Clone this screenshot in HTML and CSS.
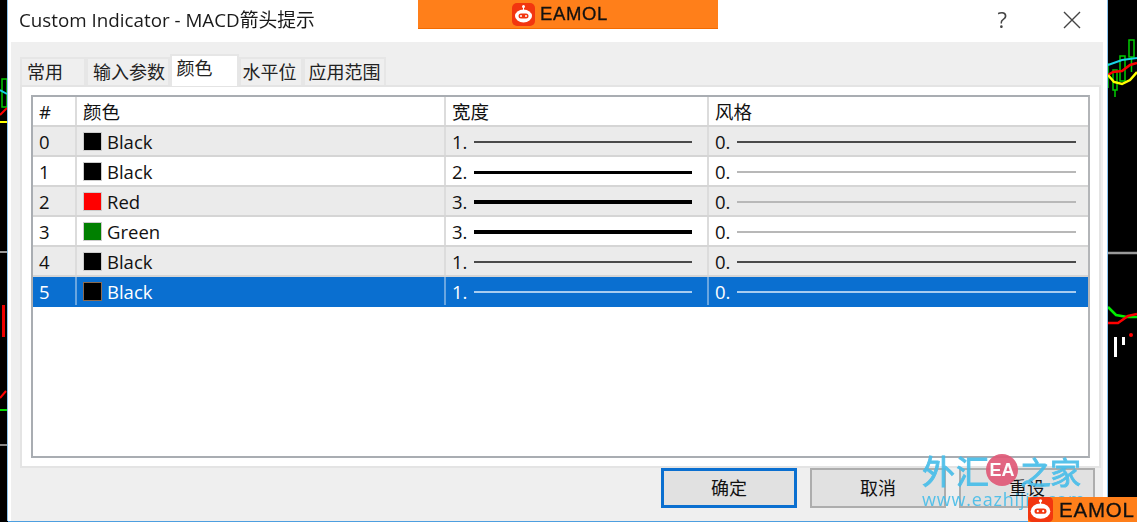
FILE: index.html
```html
<!DOCTYPE html>
<html lang="zh">
<head>
<meta charset="utf-8">
<title>Custom Indicator - MACD箭头提示</title>
<link rel="stylesheet" href="styles.css">
</head>
<body>
<svg class="chart" viewBox="0 0 1137 522" width="1137" height="522" fill="none">
  <rect x="2" y="79" width="5" height="28" stroke="#0c0" stroke-width="1.5"/>
  <path d="M0 90 L7 94" stroke="#19d3e6" stroke-width="2"/>
  <path d="M0 115 L7 108" stroke="#f00" stroke-width="2"/>
  <path d="M0 122 H7" stroke="#ff0" stroke-width="2"/>
  <path d="M0 252 H7" stroke="#999" stroke-width="2"/>
  <path d="M3.500 305 V337" stroke="#e00" stroke-width="3"/>
  <path d="M0 398 L6 391" stroke="#f00" stroke-width="2"/>
  <path d="M0 410 H7" stroke="#0d0" stroke-width="2"/>
  <path d="M0 445 H7" stroke="#888" stroke-width="2"/>
  <rect x="1129" y="40" width="5" height="17" stroke="#0c0" stroke-width="1.500"/>
  <path d="M1131.500 57 V72" stroke="#0c0" stroke-width="1.500"/>
  <rect x="1120" y="56" width="5" height="25" stroke="#0c0" stroke-width="1.500"/>
  <rect x="1113" y="70" width="4" height="20" stroke="#0c0" stroke-width="1.500"/>
  <path d="M1115 90 V97" stroke="#0c0" stroke-width="1.500"/>
  <path d="M1108 63 V88" stroke="#0c0" stroke-width="1.500"/>
  <path d="M1108 65 L1122 60 L1137 58" stroke="#19d3e6" stroke-width="2"/>
  <path d="M1108 75 L1113 72 L1122 71 L1130 65 L1137 63" stroke="#f00" stroke-width="2.500"/>
  <path d="M1108 75 L1114 82 L1122 84 L1130 80 L1137 72" stroke="#ff0" stroke-width="2.500"/>
  <path d="M1108 253 H1137" stroke="#999" stroke-width="2.500"/>
  <path d="M1108 307 L1116 315 L1127 317 H1137" stroke="#0e0" stroke-width="2.500"/>
  <path d="M1108 323 H1118 L1128 316 L1137 314" stroke="#f00" stroke-width="2.500"/>
  <circle cx="1131" cy="335" r="2" fill="#f00"/>
  <path d="M1115.500 337 V357" stroke="#fff" stroke-width="3"/>
  <path d="M1123.500 337 V345" stroke="#fff" stroke-width="3"/>
</svg>

<div class="dialog">
  <header class="titlebar">
    <div class="title">Custom Indicator - MACD箭头提示</div>
    <div class="help">?</div>
    <svg class="close" width="18" height="18" viewBox="0 0 18 18" fill="none" stroke="#444" stroke-width="1.400"><path d="M1 1 L17 17 M17 1 L1 17"/></svg>
  </header>
  <main class="body">
    <nav class="tabs">
      <span class="tab t1">常用</span>
      <span class="tab t2">输入参数</span>
      <span class="tab active t3">颜色</span>
      <span class="tab t4">水平位</span>
      <span class="tab t5">应用范围</span>
    </nav>
    <section class="panel">
      <div class="list">
        <div class="row head">
          <div class="c">#</div><div class="c">颜色</div><div class="c">宽度</div><div class="c">风格</div>
        </div>
        <div class="row alt">
          <div class="c">0</div>
          <div class="c"><i class="sw black"></i>Black</div>
          <div class="c"><span class="v">1.</span><b class="ln w1"></b></div>
          <div class="c"><span class="v">0.</span><b class="ln w1"></b></div>
        </div>
        <div class="row">
          <div class="c">1</div>
          <div class="c"><i class="sw black"></i>Black</div>
          <div class="c"><span class="v">2.</span><b class="ln w2"></b></div>
          <div class="c"><span class="v">0.</span><b class="ln faint"></b></div>
        </div>
        <div class="row alt">
          <div class="c">2</div>
          <div class="c"><i class="sw red"></i>Red</div>
          <div class="c"><span class="v">3.</span><b class="ln w3"></b></div>
          <div class="c"><span class="v">0.</span><b class="ln faint"></b></div>
        </div>
        <div class="row">
          <div class="c">3</div>
          <div class="c"><i class="sw green"></i>Green</div>
          <div class="c"><span class="v">3.</span><b class="ln w3"></b></div>
          <div class="c"><span class="v">0.</span><b class="ln faint"></b></div>
        </div>
        <div class="row alt">
          <div class="c">4</div>
          <div class="c"><i class="sw black"></i>Black</div>
          <div class="c"><span class="v">1.</span><b class="ln w1"></b></div>
          <div class="c"><span class="v">0.</span><b class="ln w1"></b></div>
        </div>
        <div class="row sel">
          <div class="c">5</div>
          <div class="c"><i class="sw black"></i>Black</div>
          <div class="c"><span class="v">1.</span><b class="ln onsel"></b></div>
          <div class="c"><span class="v">0.</span><b class="ln onsel"></b></div>
        </div>
      </div>
    </section>
    <footer class="actions">
      <button class="btn primary">确定</button>
      <button class="btn">取消</button>
      <button class="btn">重设</button>
    </footer>
  </main>
</div>

<div class="banner">
  <svg class="bot" width="23" height="23" viewBox="0 0 23 23"><rect width="23" height="23" rx="5" fill="#f2360f"/><circle cx="11.500" cy="3.500" r="1.500" fill="#fff"/><path d="M11.500 4 V7" stroke="#fff"/><ellipse cx="11.500" cy="13" rx="8.500" ry="6.500" fill="#fff"/><rect x="6.500" y="10.500" width="10" height="5" rx="2.500" fill="#f2360f"/><circle cx="9" cy="13" r="1" fill="#fff"/><circle cx="14" cy="13" r="1" fill="#fff"/></svg>
  <span class="brand">EAMOL</span>
</div>

<div class="wm">
  <div class="wm-cn"><span class="wm-a">外汇</span><span class="wm-badge">EA</span><span class="wm-b">之家</span></div>
  <div class="wm-url">www.eazhijia.com</div>
</div>

<div class="corner">
  <svg class="bot" width="25" height="25" viewBox="0 0 23 23"><rect width="23" height="23" rx="4" fill="#f2360f"/><circle cx="11.500" cy="3.500" r="1.500" fill="#fff"/><path d="M11.500 4 V7" stroke="#fff"/><ellipse cx="11.500" cy="13" rx="9" ry="7" fill="#fff"/><rect x="6" y="10.500" width="11" height="5" rx="2.500" fill="#f2360f"/><circle cx="9" cy="13" r="1" fill="#fff"/><circle cx="14" cy="13" r="1" fill="#fff"/></svg>
  <span class="brand big">EAMOL</span>
</div>
</body>
</html>
```
FILE: styles.css
```css
* { box-sizing: border-box; }
html, body { margin: 0; height: 522px; overflow: hidden; }
body {
  position: relative;
  background: #000;
  font-family: "Open Sans", "Noto Sans CJK SC", sans-serif;
  font-size: 18px;
  color: #111;
}
.chart { position: absolute; left: 0; top: 0; }
.dialog {
  position: relative;
  margin-left: 8px;
  width: 1099px;
  height: 521px;
  background: #fff;
  box-shadow: -1px 0 0 #8cc4ee, 1px 0 0 #8cc4ee, 0 1px 0 #4d9fe0;
  display: flex;
  flex-direction: column;
  filter: blur(.35px);
}
.titlebar {
  height: 42px;
  flex: none;
  display: flex;
  align-items: center;
  padding: 0 26px 4px 11px;
}
.title { flex: 1; font-size: 18.800px; color: #1a1a1a; }
.help { font-size: 22px; color: #444; margin-right: 56px; }
.close { display: block; margin-top: 1px; }
.body {
  flex: 1;
  margin: 0 4px 0 3px;
  background: #efefef;
  padding: 13px 2px 0 9px;
  display: flex;
  flex-direction: column;
}
.tabs { height: 30px; display: flex; align-items: flex-end; flex: none; position: relative; z-index: 1; }
.tab {
  height: 28px;
  background: #efefef;
  border: 2px solid #e6e6e6;
  border-bottom: none;
  font-size: 18px;
  line-height: 26px;
  text-align: center;
  white-space: nowrap;
  color: #222;
}
.t1 { width: 66px; text-align: left; padding-left: 5px; }
.t2 { width: 84px; padding-left: 2px; }
.t3 { width: 69px; padding-right: 20px; }
.t4 { width: 64px; padding-right: 3px; }
.t5 { width: 83px; }
.active {
  height: 32px;
  background: #fff;
  line-height: 25px;
  margin-bottom: -1px;
}
.panel {
  height: 383px;
  flex: none;
  background: #fff;
  border: 2px solid #e4e4e4;
  padding: 8px 9px 8px 9px;
}
.list {
  height: 363px;
  border: 2px solid #a9adb2;
  border-right-color: #b3b5b8;
  background: #fff;
}
.row {
  display: grid;
  grid-template-columns: 44px 369px 263px 1fr;
  height: 30px;
  border-bottom: 2px solid #d5d5d5;
  align-items: stretch;
}
.head { background: #fff; }
.alt { background: #ebebeb; }
.sel { background: #0a6fd0; color: #fff; border-bottom-color: #0a6fd0; }
.c {
  display: flex;
  align-items: center;
  padding-left: 6px;
  border-right: 2px solid #dcdcdc;
  min-width: 0;
  white-space: nowrap;
  font-size: 18.500px;
}
.c:last-child { border-right: none; padding-right: 12px; }
.sel .c { border-right-color: #6aa6e0; }
.sw {
  width: 19px;
  height: 19px;
  margin-right: 5px;
  flex: none;
  border: 1px solid #ccc;
}
.black { background: #000; }
.red { background: #f00; }
.green { background: #008000; }
.sel .sw { border-color: #8a6a50; }
.v { width: 22px; flex: none; }
.ln { flex: 1; display: block; margin-top: 2px; }
.w1 { height: 2px; background: #4a4a4a; }
.w2 { height: 3px; background: #000; }
.w3 { height: 4px; background: #000; }
.faint { height: 2px; background: #b8b8b8; }
.onsel { height: 2px; background: #a9cdf0; }
.c:nth-child(3) { padding-right: 15px; }
.actions {
  display: flex;
  justify-content: flex-end;
  gap: 13px;
  padding-right: 6px;
}
.btn {
  width: 136px;
  height: 40px;
  background: #e1e1e1;
  border: 2px solid #adadad;
  font: inherit;
  font-size: 18px;
  color: #111;
  padding: 0 0 2px;
}
.primary { border: 3px solid #0a6fd0; }
.banner {
  position: absolute;
  left: 418px;
  top: 0;
  width: 300px;
  height: 29px;
  background: #ff7f1a;
  border-bottom: 1px solid #f26a00;
  display: flex;
  align-items: center;
  gap: 5px;
  padding-left: 94px;
  filter: blur(.35px);
}
.brand {
  font-family: "Liberation Sans", sans-serif;
  font-size: 18.500px;
  letter-spacing: .6px;
  color: #111;
  -webkit-text-stroke: .3px #111;
}
.big { font-size: 20.500px; letter-spacing: .8px; }
.wm {
  position: absolute;
  left: 922px;
  top: 450px;
  width: 165px;
  color: #48bde9;
  opacity: .92;
  filter: blur(.35px);
}
.wm-cn {
  display: flex;
  align-items: center;
  height: 40px;
  white-space: nowrap;
  font-size: 33px;
  -webkit-text-stroke: .9px #48bde9;
}
.wm-a { width: 64px; letter-spacing: 1px; }
.wm-b { font-size: 31px; letter-spacing: -1px; margin-left: 2px; }
.wm-badge {
  width: 32px;
  height: 32px;
  border-radius: 50%;
  background: #e05a78;
  color: #fff;
  font-family: "Liberation Sans", sans-serif;
  font-size: 18px;
  font-weight: bold;
  line-height: 32px;
  text-align: center;
  flex: none;
  -webkit-text-stroke: 0;
}
.wm-url { font-size: 18px; line-height: 20px; margin-top: -1px; letter-spacing: .8px; white-space: nowrap; }
.corner {
  position: absolute;
  left: 1028px;
  top: 497px;
  width: 109px;
  height: 25px;
  background: #ff7f1a;
  display: flex;
  align-items: center;
  gap: 6px;
  filter: blur(.35px);
}
```
